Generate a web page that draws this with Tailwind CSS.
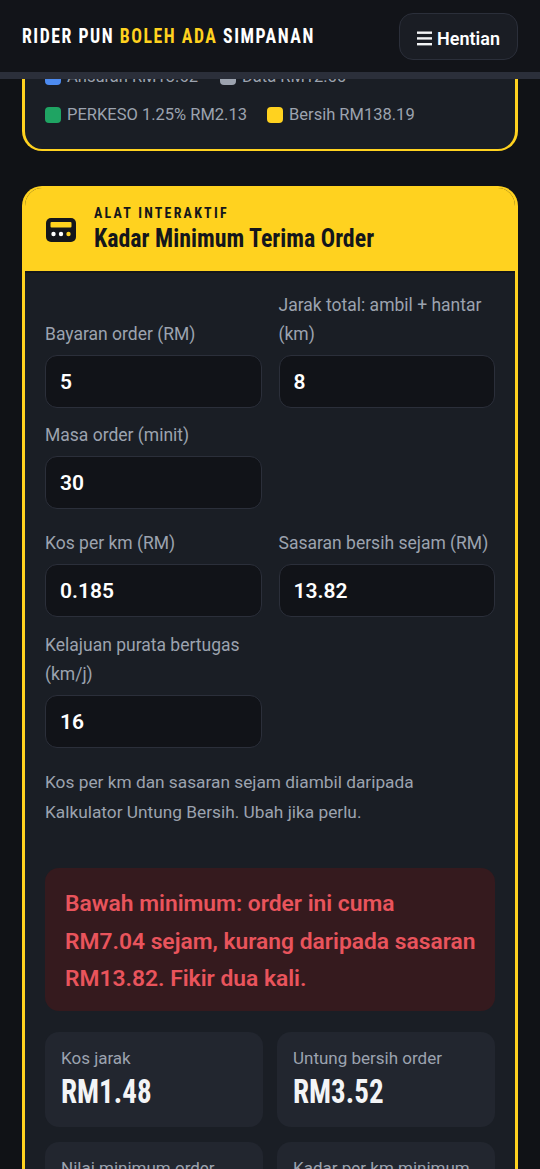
<!DOCTYPE html>
<html lang="ms">
<head>
    <meta charset="UTF-8">
    <meta name="viewport" content="width=device-width, initial-scale=1.0">
    <title>Rider Pun Boleh Ada Simpanan</title>
    <script src="https://cdn.jsdelivr.net/npm/@tailwindcss/browser@4"></script>
</head>
<body class="bg-[#101216] text-white font-['Roboto',sans-serif]">
<div class="relative h-[1169px] overflow-hidden">
    <!-- sticky header sits over the scrolled page -->
    <header class="absolute top-0 inset-x-0 z-10 h-[79px] flex justify-between items-start pl-[22px] pr-[22px] pt-[13px] bg-[#121419] border-b-[7px] border-[#2b2f3a]">
        <h1 class="mt-[10px] whitespace-nowrap origin-left scale-x-[0.846] text-[21px] leading-[26px] font-bold tracking-[1.8px] font-['Roboto_Condensed',sans-serif]">RIDER PUN <span class="text-[#ffd21f]">BOLEH ADA</span> SIMPANAN</h1>
        <button class="w-[119px] h-[47px] pt-[3px] flex items-center justify-center gap-[5px] rounded-[14px] border border-[#2b2f3a] bg-[#1a1d24] text-[18px] font-semibold">
            <svg class="w-[15px] h-[15px]" viewBox="0 0 15 15" fill="#f3f4f6"><rect y="0.5" width="15" height="2.4"/><rect y="6.2" width="15" height="2.4"/><rect y="12" width="15" height="2.4"/></svg>
            Hentian
        </button>
    </header>

    <main class="flex flex-col gap-[35px] px-[22px] pt-[58px]">
        <section class="h-[93px] flex flex-col justify-end gap-[21px] pb-[26px] px-[20px] bg-[#1a1e25] border-x-[3px] border-b-[2.5px] border-[#ffd21f] rounded-b-[20px] text-[16.5px] leading-[17px] text-[#9ca3af]">
            <div class="flex items-center">
                <span class="w-[16px] h-[16px] rounded-[4px] bg-[#4d8bf0]"></span><span class="ml-[6px]">Ansuran RM13.62</span>
                <span class="ml-[22px] w-[16px] h-[16px] rounded-[4px] bg-[#9ca3af]"></span><span class="ml-[6px]">Data RM12.00</span>
            </div>
            <div class="flex items-center">
                <span class="w-[16px] h-[16px] rounded-[4px] bg-[#1fa463]"></span><span class="ml-[6px]">PERKESO 1.25% RM2.13</span>
                <span class="ml-[20px] w-[16px] h-[16px] rounded-[4px] bg-[#ffd21f]"></span><span class="ml-[6px]">Bersih RM138.19</span>
            </div>
        </section>

        <section class="rounded-t-[20px] border-x-[3px] border-t-[2px] border-[#ffd21f] bg-[#1a1e25] overflow-hidden">
            <div class="h-[85px] flex items-center gap-[18px] pl-[21px] bg-[#ffd21f] border-b-2 border-[#14161b] text-[#14161b]">
                <svg class="w-[30px] h-[24px]" viewBox="0 0 30 24">
                    <rect width="30" height="24" rx="5" fill="#14161b"/>
                    <rect x="4.5" y="4" width="21" height="5.5" rx="1" fill="#ffd21f"/>
                    <circle cx="7.5" cy="16" r="2.2" fill="#fff"/>
                    <circle cx="15" cy="16" r="2.2" fill="#fff"/>
                    <circle cx="22.5" cy="16" r="2.2" fill="#ffd21f"/>
                </svg>
                <div class="font-['Roboto_Condensed',sans-serif] font-bold">
                    <p class="whitespace-nowrap origin-left scale-x-[0.93] text-[15px] leading-[16px] tracking-[2.4px]">ALAT INTERAKTIF</p>
                    <h2 class="mt-[3px] whitespace-nowrap origin-left scale-x-[0.956] text-[25px] leading-[30px]">Kadar Minimum Terima Order</h2>
                </div>
            </div>

            <div class="px-[20px] pt-[18px]">
                <div class="grid grid-cols-2 gap-x-[17px] gap-y-[13px] items-end text-[17.5px] leading-[29px] text-[#9ca3af]">
                    <label class="flex flex-col justify-end gap-[6px] h-full">Bayaran order (RM)
                        <input value="5" class="w-full h-[53px] px-[14px] rounded-[12px] border border-[#2b2f3a] bg-[#111318] text-[21px] font-semibold text-white">
                    </label>
                    <label class="flex flex-col justify-end gap-[6px] h-full">Jarak total: ambil + hantar (km)
                        <input value="8" class="w-full h-[53px] px-[14px] rounded-[12px] border border-[#2b2f3a] bg-[#111318] text-[21px] font-semibold text-white">
                    </label>
                    <label class="flex flex-col justify-end gap-[6px] h-full">Masa order (minit)
                        <input value="30" class="w-full h-[53px] px-[14px] rounded-[12px] border border-[#2b2f3a] bg-[#111318] text-[21px] font-semibold text-white">
                    </label>
                </div>
                <div class="mt-[20px] grid grid-cols-2 gap-x-[17px] gap-y-[14px] items-end text-[17.5px] leading-[29px] text-[#9ca3af]">
                    <label class="flex flex-col justify-end gap-[6px] h-full">Kos per km (RM)
                        <input value="0.185" class="w-full h-[53px] px-[14px] rounded-[12px] border border-[#2b2f3a] bg-[#111318] text-[21px] font-semibold text-white">
                    </label>
                    <label class="flex flex-col justify-end gap-[6px] h-full">Sasaran bersih sejam (RM)
                        <input value="13.82" class="w-full h-[53px] px-[14px] rounded-[12px] border border-[#2b2f3a] bg-[#111318] text-[21px] font-semibold text-white">
                    </label>
                    <label class="flex flex-col justify-end gap-[6px] h-full">Kelajuan purata bertugas (km/j)
                        <input value="16" class="w-full h-[53px] px-[14px] rounded-[12px] border border-[#2b2f3a] bg-[#111318] text-[21px] font-semibold text-white">
                    </label>
                </div>

                <p class="mt-[19px] max-w-[400px] text-[17.3px] leading-[30px] text-[#9ca3af]">Kos per km dan sasaran sejam diambil daripada Kalkulator Untung Bersih. Ubah jika perlu.</p>

                <div class="mt-[41px] h-[143px] pl-[20px] pr-[18px] py-[17px] rounded-[14px] bg-[#351a1e] text-[22.8px] leading-[37.5px] font-semibold text-[#e9545c]">
                    Bawah minimum: order ini cuma RM7.04 sejam, kurang daripada sasaran RM13.82. Fikir dua kali.
                </div>

                <div class="mt-[21px] grid grid-cols-2 gap-x-[14px] gap-y-[15px]">
                    <div class="h-[95px] pl-[16px] pt-[13px] rounded-[14px] bg-[#22262f]">
                        <p class="text-[17px] leading-[26px] text-[#9ca3af]">Kos jarak</p>
                        <p class="origin-left scale-x-[0.88] text-[33px] leading-[42px] font-bold text-[#f3f4f6] font-['Roboto_Condensed',sans-serif]">RM1.48</p>
                    </div>
                    <div class="h-[95px] pl-[16px] pt-[13px] rounded-[14px] bg-[#22262f]">
                        <p class="text-[17px] leading-[26px] text-[#9ca3af]">Untung bersih order</p>
                        <p class="origin-left scale-x-[0.88] text-[33px] leading-[42px] font-bold text-[#f3f4f6] font-['Roboto_Condensed',sans-serif]">RM3.52</p>
                    </div>
                    <div class="h-[95px] pl-[16px] pt-[13px] rounded-[14px] bg-[#22262f]">
                        <p class="text-[17px] leading-[26px] text-[#9ca3af]">Nilai minimum order</p>
                    </div>
                    <div class="h-[95px] pl-[16px] pt-[13px] rounded-[14px] bg-[#22262f]">
                        <p class="text-[17px] leading-[26px] text-[#9ca3af]">Kadar per km minimum</p>
                    </div>
                </div>
            </div>
        </section>
    </main>
</div>
</body>
</html>
